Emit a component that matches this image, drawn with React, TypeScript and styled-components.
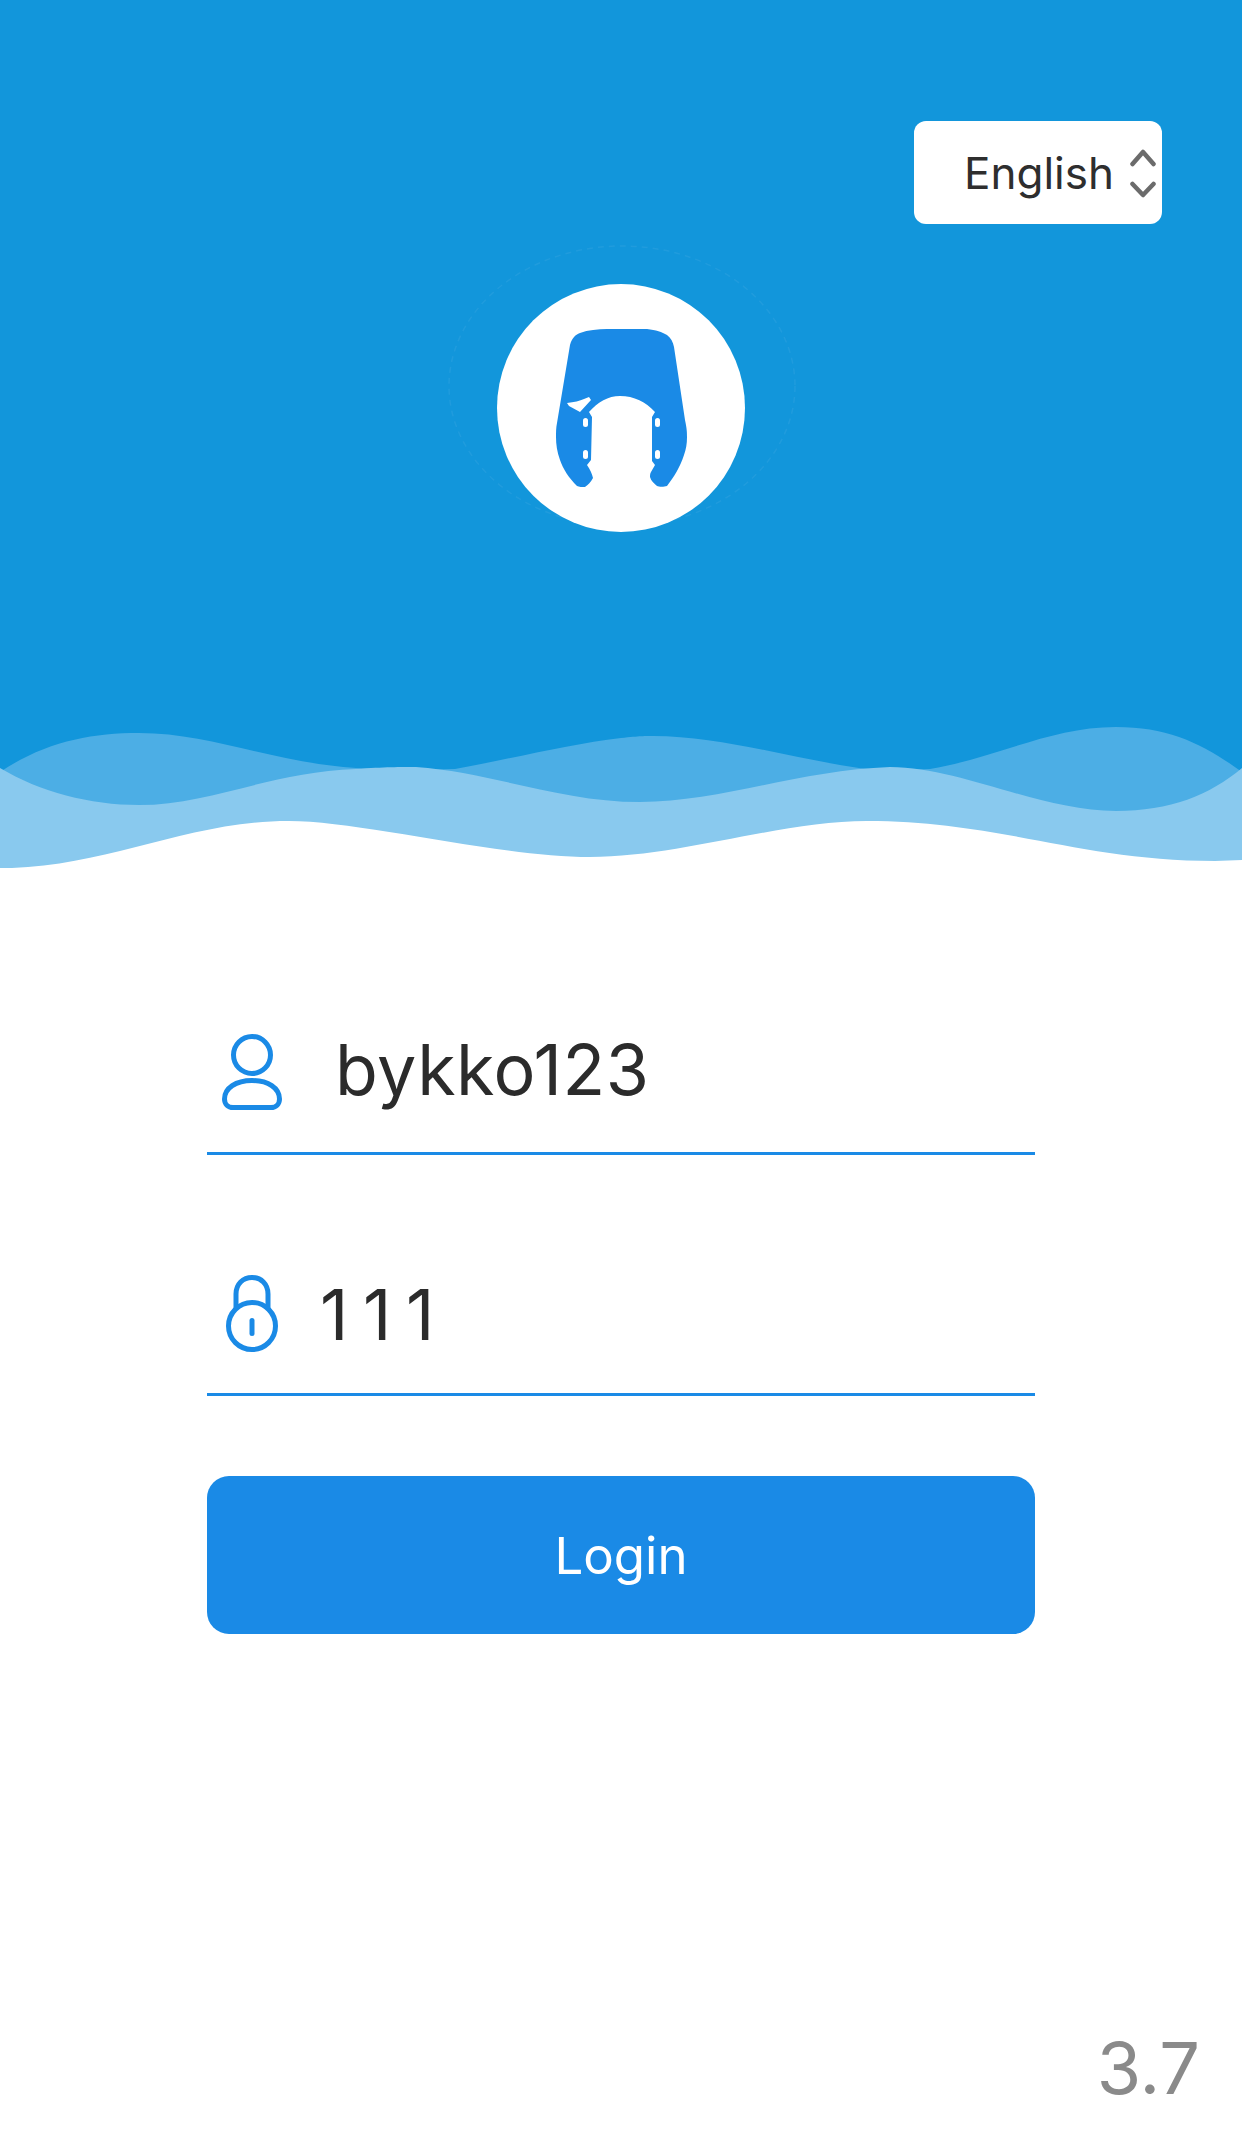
import React from "react";
import styled, { createGlobalStyle } from "styled-components";

const GlobalStyle = createGlobalStyle`
  html, body {
    margin: 0;
    padding: 0;
    background: #fff;
  }
  body {
    font-family: Inter, "Liberation Sans", sans-serif;
  }
`;

const Page = styled.div`
  width: 1242px;
  height: 2150px;
  display: flex;
  flex-direction: column;
  overflow: hidden;
  background: #fff;
`;

const Hero = styled.header`
  height: 870px;
  flex: none;
  position: relative;
  isolation: isolate;
  padding: 121px 80px 0 0;
  box-sizing: border-box;
  display: flex;
  flex-direction: column;
  align-items: flex-end;
  background: #1296db;
`;

const Waves = styled.svg`
  position: absolute;
  left: 0;
  top: 700px;
  width: 1242px;
  height: 170px;
`;

const LangSelect = styled.div`
  width: 248px;
  height: 103px;
  box-sizing: border-box;
  padding: 0 6px 0 50px;
  display: flex;
  align-items: center;
  justify-content: space-between;
  background: #fff;
  border-radius: 12px;
  font-size: 44px;
  color: #2e2e2e;
`;

const LogoWrap = styled.div`
  position: relative;
  align-self: center;
  width: 248px;
  height: 248px;
  margin: 60px 0 0 80px;
  border-radius: 50%;
  background: #fff;
  display: flex;
  align-items: center;
  justify-content: center;
`;

const Ring = styled.svg`
  position: absolute;
  z-index: -1;
  left: -49px;
  top: -40px;
  width: 348px;
  height: 284px;
`;

const Form = styled.main`
  width: 828px;
  margin: 0 auto;
  padding-top: 118px;
  display: flex;
  flex-direction: column;
`;

const Field = styled.div<{ $height: number; $top?: number }>`
  height: ${(p) => p.$height}px;
  margin-top: ${(p) => p.$top ?? 0}px;
  box-sizing: border-box;
  border-bottom: 3px solid #1a8ae6;
  display: flex;
  align-items: center;
  font-size: 70px;
  color: #2b2b2b;
`;

const IconBox = styled.div`
  width: 90px;
  display: flex;
  align-items: center;
  justify-content: center;
  flex: none;
`;

const Value = styled.span<{ $indent: number; $tracking: number }>`
  margin-left: ${(p) => p.$indent}px;
  letter-spacing: ${(p) => p.$tracking}px;
  line-height: 1;
`;

const LoginButton = styled.button`
  height: 158px;
  margin-top: 80px;
  padding: 0;
  border: 0;
  border-radius: 22px;
  background: #1a8ae6;
  color: #fff;
  font-family: inherit;
  font-size: 51px;
  font-weight: 400;
`;

const Version = styled.div`
  margin: auto 42px 46px auto;
  font-size: 72px;
  line-height: 1;
  color: #8a8a8a;
`;

const App = () => {
  return (
    <Page>
      <GlobalStyle />
      <Hero>
        <Waves viewBox="0 0 1242 170">
          <path
            fill="#4caee5"
            d="M0 72 C45 42 90 33 139 33 C210 33 270 62 356 68 C400 70 420 70 455 69 C520 57 570 44 621 38 C640 36 645 36 653 36 C720 36 790 58 859 68 C880 70 910 70 930 69 C1000 57 1050 27 1116 27 C1170 27 1205 45 1242 72 L1242 130 L0 130 Z"
          />
          <path
            fill="#89c9ee"
            d="M0 68 C40 92 90 105 139 105 C210 105 270 72 356 69 C385 67 400 67 416 67 C490 72 560 102 640 102 C720 102 800 70 890 67 C960 67 1040 111 1116 111 C1170 111 1210 95 1242 68 L1242 170 L0 170 Z"
          />
          <path
            fill="#fff"
            d="M0 168 C4 168 8 168 12 168 C110 165 190 121 289 121 C360 121 500 157 590 157 C680 157 780 121 867 121 C1000 121 1080 161 1215 161 L1242 160 L1242 170 L0 170 Z"
          />
        </Waves>
        <LangSelect>
          English
          <svg width="26" height="50" viewBox="0 0 26 50" fill="none" stroke="#6b6b6b" strokeWidth="4.5" strokeLinecap="round" strokeLinejoin="round">
            <path d="M2.5 16 L13 4 L23.5 16" />
            <path d="M2.5 36 L13 47 L23.5 36" />
          </svg>
        </LangSelect>
        <LogoWrap>
          <Ring viewBox="0 0 348 284">
            <ellipse cx="174" cy="142" rx="173" ry="140" fill="none" stroke="#2ba0df" strokeOpacity="0.55" strokeWidth="1.5" strokeDasharray="6 5" />
          </Ring>
          <svg width="131" height="158" viewBox="0 0 131 158">
            <path
              fill="#1a8ae6"
              d="M14 16 C16 9 19 6 24 4 C32 1 42 0 51 0 L91 0 C100 1 106 3 111 6 C115 9 117 13 118 18 L129 91 C131 100 131 104 131 108 C131 115 130 120 128 126 C124 138 118 148 111 157 C108 158 103 158 101 157 C98 154 95 152 94 148 C94 146 94 145 95 143 L99 136 L96 132 L96 88 L99 83 C90 73 78 67 64 67 C52 67 42 73 33 83 L36 88 L35 131 L31 136 C34 140 36 145 37 149 C35 153 32 156 29 158 C26 158 23 158 21 157 C13 149 7 140 4 131 C1 123 0 115 0 108 C0 103 0 99 1 94 Z"
            />
            <path fill="#fff" d="M11 74 C18 73 24 72 28 70 L33 68 L35 71 L24 83 L13 77 Z" />
            <rect fill="#fff" x="27" y="89" width="5" height="9" rx="2.5" />
            <rect fill="#fff" x="27" y="121" width="5" height="9" rx="2.5" />
            <rect fill="#fff" x="99" y="89" width="5" height="9" rx="2.5" />
            <rect fill="#fff" x="99" y="121" width="5" height="9" rx="2.5" />
          </svg>
        </LogoWrap>
      </Hero>
      <Form>
        <Field $height={167}>
          <IconBox>
            <svg width="60" height="80" viewBox="0 0 60 80" fill="none" stroke="#1a8ae6" strokeWidth="5">
              <circle cx="30" cy="25" r="18.5" />
              <path d="M11 77.5 C6 77.5 2.5 74 2.5 69 C2.5 58 14 50.5 30 50.5 C46 50.5 57.5 58 57.5 69 C57.5 74 54 77.5 49 77.5 Z" />
            </svg>
          </IconBox>
          <Value $indent={38} $tracking={0.5}>bykko123</Value>
        </Field>
        <Field $height={159} $top={82}>
          <IconBox>
            <svg width="52" height="80" viewBox="0 0 52 80" fill="none" stroke="#1a8ae6" strokeWidth="5" strokeLinecap="round">
              <circle cx="26" cy="51" r="23.5" />
              <path d="M10 32 V19 C10 9 17 2.5 26 2.5 C35 2.5 42 9 42 19 V32" />
              <path d="M26 45.5 V58.5" />
            </svg>
          </IconBox>
          <Value $indent={23} $tracking={14.5}>111</Value>
        </Field>
        <LoginButton>Login</LoginButton>
      </Form>
      <Version>3.7</Version>
    </Page>
  );
};

export default App;
